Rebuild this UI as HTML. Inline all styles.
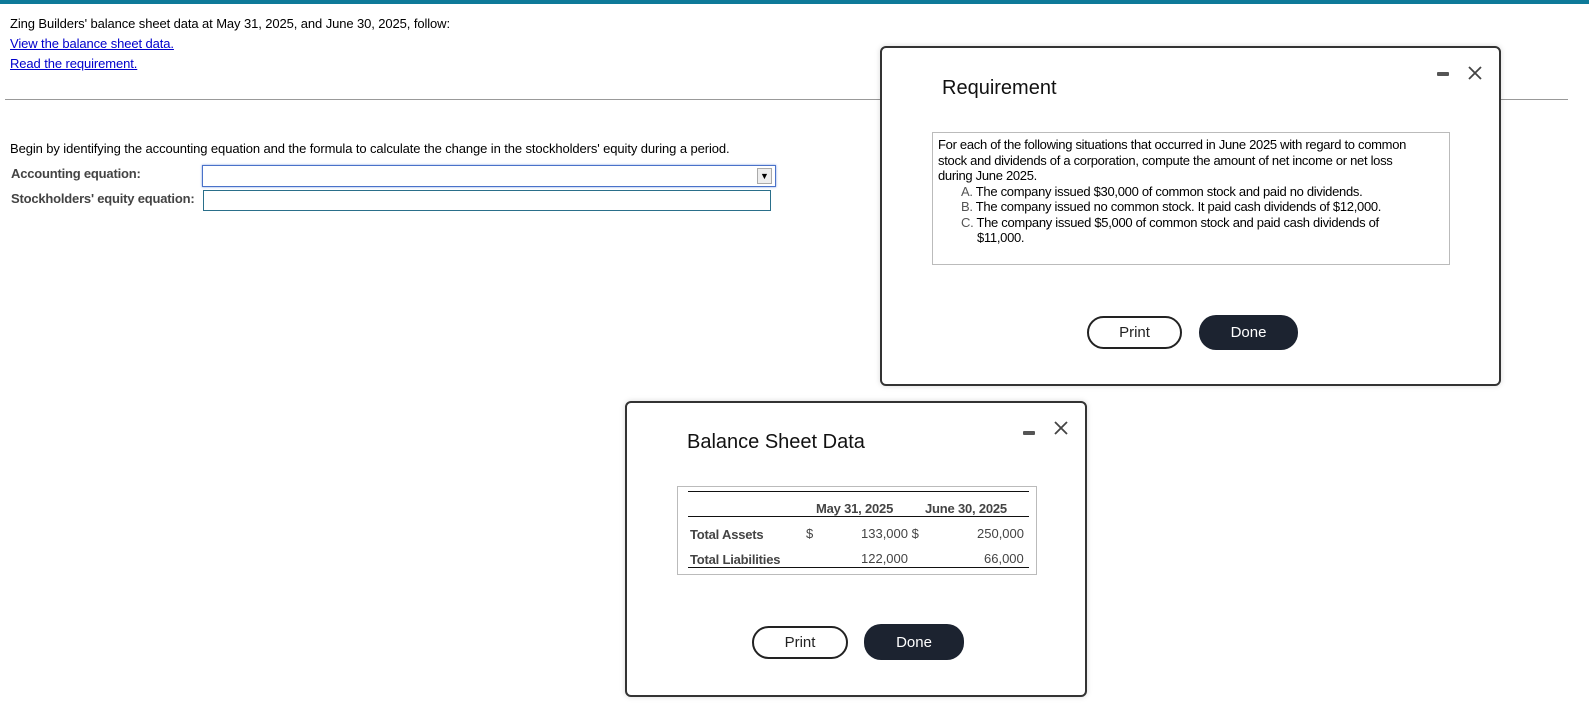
<!DOCTYPE html>
<html><head><meta charset="utf-8"><style>
*{margin:0;padding:0;box-sizing:border-box}
body{width:1589px;height:714px;background:#fff;position:relative;overflow:hidden;font-family:"Liberation Sans",Arial,sans-serif;color:#000}
.a{position:absolute;white-space:nowrap}
.t{font-size:13px;letter-spacing:-0.1px}
a{color:#0000cc;text-decoration:underline}
.lbl{font-size:13px;font-weight:bold;color:#444;letter-spacing:-0.2px}
.dlg{position:absolute;border:2px solid #333;border-radius:6px;background:#fff;box-shadow:0 0 6px rgba(0,0,0,.15)}
.btn{position:absolute;border-radius:17px;font-size:15px;display:flex;align-items:center;justify-content:center}
.pr{border:2px solid #222;background:#fff;color:#222}
.dn{background:#1c2330;color:#fff}
.min{position:absolute;width:12px;height:4px;background:#555;border-radius:1px}
.n{font-size:13px;color:#444}
</style></head><body>
<div class="a" style="left:0;top:0;width:1589px;height:4px;background:#0e7a99"></div>
<div class="a t" style="left:10px;top:16px">Zing Builders' balance sheet data at May 31, 2025, and June 30, 2025, follow:</div>
<div class="a t" style="left:10px;top:36px"><a>View the balance sheet data.</a></div>
<div class="a t" style="left:10px;top:56px"><a>Read the requirement.</a></div>
<div class="a" style="left:5px;top:99px;width:1563px;height:1px;background:#999"></div>
<div class="a t" style="left:10px;top:141px">Begin by identifying the accounting equation and the formula to calculate the change in the stockholders' equity during a period.</div>
<div class="a lbl" style="left:11px;top:166px">Accounting equation:</div>
<div class="a lbl" style="left:11px;top:191px">Stockholders' equity equation:</div>
<div class="a" style="left:202px;top:165px;width:574px;height:22px;border:1px solid #4a72c9;box-shadow:0 0 2px #7a9ae0"></div>
<div class="a" style="left:757px;top:168px;width:15px;height:16px;border:1px solid #aaa;background:#eee;font-size:9px;text-align:center;line-height:15px">▼</div>
<div class="a" style="left:203px;top:190px;width:568px;height:21px;border:1px solid #2a6f8a"></div>

<div class="dlg" style="left:880px;top:46px;width:621px;height:340px">
<div class="a" style="left:60px;top:29px;font-size:20px;color:#111">Requirement</div>
<div class="min" style="left:555px;top:24px"></div>
<svg class="a" style="left:585px;top:17px" width="16" height="16"><path d="M2 2L14 14M14 2L2 14" stroke="#444" stroke-width="1.8"/></svg>
<div class="a" style="left:50px;top:84px;width:518px;height:133px;border:1px solid #bbb;font-size:13px;letter-spacing:-0.3px;line-height:15.5px;padding:4px 25px 4px 5px;white-space:normal">
For each of the following situations that occurred in June 2025 with regard to common stock and dividends of a corporation, compute the amount of net income or net loss during June 2025.
<div style="padding-left:23px"><span style="color:#555">A.</span> The company issued $30,000 of common stock and paid no dividends.</div>
<div style="padding-left:23px"><span style="color:#555">B.</span> The company issued no common stock. It paid cash dividends of $12,000.</div>
<div style="padding-left:23px"><span style="color:#555">C.</span> The company issued $5,000 of common stock and paid cash dividends of<br><span style="padding-left:16px">$11,000.</span></div>
</div>
<div class="btn pr" style="left:205px;top:268px;width:95px;height:33px">Print</div>
<div class="btn dn" style="left:317px;top:267px;width:99px;height:35px">Done</div>
</div>

<div class="dlg" style="left:625px;top:401px;width:462px;height:296px">
<div class="a" style="left:60px;top:28px;font-size:20px;color:#111">Balance Sheet Data</div>
<div class="min" style="left:396px;top:28px"></div>
<svg class="a" style="left:426px;top:17px" width="16" height="16"><path d="M2 2L14 14M14 2L2 14" stroke="#444" stroke-width="1.8"/></svg>
<div class="a" style="left:50px;top:83px;width:360px;height:89px;border:1px solid #bbb"></div>
<div class="a" style="left:61px;top:88px;width:341px;height:1px;background:#111"></div>
<div class="a" style="left:61px;top:113px;width:341px;height:1px;background:#111"></div>
<div class="a" style="left:61px;top:164px;width:341px;height:1px;background:#111"></div>
<div class="a lbl" style="left:189px;top:98px">May 31, 2025</div>
<div class="a lbl" style="left:298px;top:98px">June 30, 2025</div>
<div class="a lbl" style="left:63px;top:124px">Total Assets</div>
<div class="a lbl" style="left:63px;top:149px">Total Liabilities</div>
<div class="a n" style="left:179px;top:123px">$</div>
<div class="a n" style="left:234px;top:123px">133,000 $</div>
<div class="a n" style="left:350px;top:123px">250,000</div>
<div class="a n" style="left:234px;top:148px">122,000</div>
<div class="a n" style="left:357px;top:148px">66,000</div>
<div class="btn pr" style="left:125px;top:223px;width:96px;height:33px">Print</div>
<div class="btn dn" style="left:237px;top:221px;width:100px;height:36px">Done</div>
</div>
</body></html>
